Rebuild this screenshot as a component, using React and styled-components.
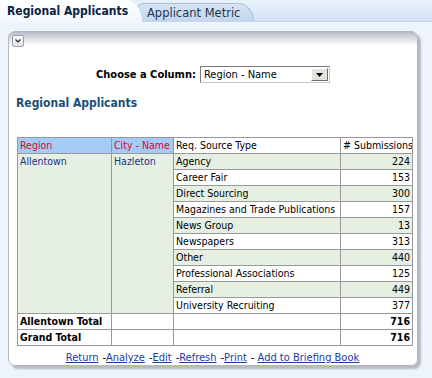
import React from "react";
import styled, { createGlobalStyle } from "styled-components";

const Global = createGlobalStyle`
  html, body { margin: 0; padding: 0; }
  body {
    background: #eef4fc;
    font-family: "DejaVu Sans Condensed", "DejaVu Sans", sans-serif;
    font-size: 11px;
    color: #000;
    width: 432px;
    height: 378px;
    overflow: hidden;
  }
`;

const Page = styled.div`
  display: flex;
  flex-direction: column;
  width: 432px;
  height: 378px;
`;

const TabBar = styled.div`
  display: flex;
  align-items: flex-end;
  height: 22px;
  background: linear-gradient(to bottom, #e9f1fb 0%, #d4e3f4 100%);
  border-bottom: 1px solid #c5d6ea;
  box-sizing: border-box;
`;

const ActiveTab = styled.div`
  position: relative;
  z-index: 2;
  height: 22px;
  width: 142px;
  box-sizing: border-box;
  padding: 4px 0 0 7px;
  background: linear-gradient(to bottom, #ffffff 0%, #f2f7fd 100%);
  border-top-right-radius: 16px 22px;
  margin-bottom: -1px;
  font-weight: bold;
  font-size: 12px;
  color: #0c2340;
`;

const Tab = styled.div`
  height: 18px;
  margin-left: -6px;
  width: 118px;
  box-sizing: border-box;
  padding: 2px 0 0 10px;
  background: linear-gradient(to bottom, #d6e4f4 0%, #c3d6ec 100%);
  border: 1px solid #a8bed8;
  border-bottom: none;
  border-top-left-radius: 8px;
  border-top-right-radius: 16px 18px;
  font-family: "DejaVu Sans", sans-serif;
  font-size: 11.5px;
  color: #1d3550;
`;

const Panel = styled.div`
  margin: 9px 0 0 8px;
  width: 410px;
  height: 335px;
  box-sizing: border-box;
  background: linear-gradient(to bottom, #b7bcc6 0px, #e4e6ea 8px, #ffffff 14px);
  border: 1px solid #b3b7bf;
  border-radius: 7px;
  box-shadow: 3px 3px 2px #b6bac2;
  display: flex;
  flex-direction: column;
  padding: 3px 0 0 3px;
`;

const Collapse = styled.div`
  width: 10px;
  height: 10px;
  border: 1px solid #9aa0aa;
  border-radius: 2px;
  background: linear-gradient(#ffffff, #dfe3ea);
  display: flex;
  align-items: center;
  justify-content: center;
`;

const ChooserRow = styled.div`
  display: flex;
  justify-content: center;
  align-items: center;
  gap: 4px;
  margin-top: 19px;
  padding-right: 3px;
`;

const Label = styled.span`
  font-weight: bold;
  font-size: 11px;
`;

const Select = styled.div`
  width: 130px;
  height: 17px;
  box-sizing: border-box;
  border: 1px solid #7a7a7a;
  border-right-color: #c8c8c8;
  border-bottom-color: #c8c8c8;
  display: flex;
  align-items: center;
  justify-content: space-between;
  padding-left: 3px;
  font-size: 11px;
  background: #fff;
`;

const SelectBtn = styled.div`
  width: 17px;
  height: 13px;
  margin-right: 1px;
  box-sizing: border-box;
  background: #e4e2dc;
  border: 1px solid #fff;
  border-right-color: #6f6f6f;
  border-bottom-color: #6f6f6f;
  display: flex;
  align-items: center;
  justify-content: center;
`;

const Heading = styled.div`
  margin: 13px 0 0 4px;
  font-weight: bold;
  font-size: 12px;
  color: #1c4f73;
`;

const Table = styled.table`
  margin: 27px 0 0 5px;
  border-collapse: collapse;
  width: 395px;
  table-layout: fixed;
  font-size: 10.5px;
`;

const Cell = styled.td`
  border: 1px solid #999;
  height: 16px;
  padding: 0 2px;
  box-sizing: border-box;
  vertical-align: top;
  line-height: 14px;
  white-space: nowrap;
  overflow: hidden;
  text-align: ${(p) => (p.$num ? "right" : "left")};
  font-weight: ${(p) => (p.$bold ? "bold" : "normal")};
  color: ${(p) => (p.$red ? "#e4002b" : p.$blue ? "#1b2f8c" : "#000")};
  background: ${(p) =>
    p.$bg === "head" ? "#a3cbf5" : p.$bg === "green" ? "#e5efe2" : "#ffffff"};
`;

const Links = styled.div`
  display: flex;
  justify-content: center;
  gap: 4px;
  margin-top: 5px;
  padding-right: 4px;
`;

const Link = styled.a`
  color: #1c3c9c;
  text-decoration: underline;
`;

const rows = [
  ["Agency", 224],
  ["Career Fair", 153],
  ["Direct Sourcing", 300],
  ["Magazines and Trade Publications", 157],
  ["News Group", 13],
  ["Newspapers", 313],
  ["Other", 440],
  ["Professional Associations", 125],
  ["Referral", 449],
  ["University Recruiting", 377],
];

export default function App() {
  return (
    <Page>
      <Global />
      <TabBar>
        <ActiveTab>Regional Applicants</ActiveTab>
        <Tab>Applicant Metric</Tab>
      </TabBar>
      <Panel>
        <Collapse>
          <svg width="8" height="6" viewBox="0 0 8 6">
            <path d="M1.5 1.5 L4 4 L6.5 1.5" stroke="#222" strokeWidth="1.2" fill="none" />
          </svg>
        </Collapse>
        <ChooserRow>
          <Label>Choose a Column:</Label>
          <Select>
            <span>Region - Name</span>
            <SelectBtn>
              <svg width="7" height="4" viewBox="0 0 7 4">
                <path d="M0 0 H7 L3.5 4 Z" fill="#000" />
              </svg>
            </SelectBtn>
          </Select>
        </ChooserRow>
        <Heading>Regional Applicants</Heading>
        <Table>
          <colgroup>
            <col style={{ width: 94 }} />
            <col style={{ width: 62 }} />
            <col style={{ width: 167 }} />
            <col style={{ width: 72 }} />
          </colgroup>
          <tbody>
            <tr>
              <Cell $bg="head" $red>Region</Cell>
              <Cell $bg="head" $red>City - Name</Cell>
              <Cell>Req. Source Type</Cell>
              <Cell $num>{"# Submissions"}</Cell>
            </tr>
            {rows.map(([name, n], i) => {
              const bg = i % 2 === 0 ? "green" : "white";
              return (
                <tr key={name}>
                  {i === 0 && (
                    <>
                      <Cell rowSpan={rows.length} $bg="green" $blue>Allentown</Cell>
                      <Cell rowSpan={rows.length} $bg="green" $blue>Hazleton</Cell>
                    </>
                  )}
                  <Cell $bg={bg}>{name}</Cell>
                  <Cell $bg={bg} $num>{n}</Cell>
                </tr>
              );
            })}
            <tr>
              <Cell $bold>Allentown Total</Cell>
              <Cell />
              <Cell />
              <Cell $num $bold>716</Cell>
            </tr>
            <tr>
              <Cell $bold>Grand Total</Cell>
              <Cell />
              <Cell />
              <Cell $num $bold>716</Cell>
            </tr>
          </tbody>
        </Table>
        <Links>
          <Link>Return</Link>
          <span>-<Link>Analyze</Link></span>
          <span>-<Link>Edit</Link></span>
          <span>-<Link>Refresh</Link></span>
          <span>-<Link>Print</Link></span>
          <span>- <Link>Add to Briefing Book</Link></span>
        </Links>
      </Panel>
    </Page>
  );
}
